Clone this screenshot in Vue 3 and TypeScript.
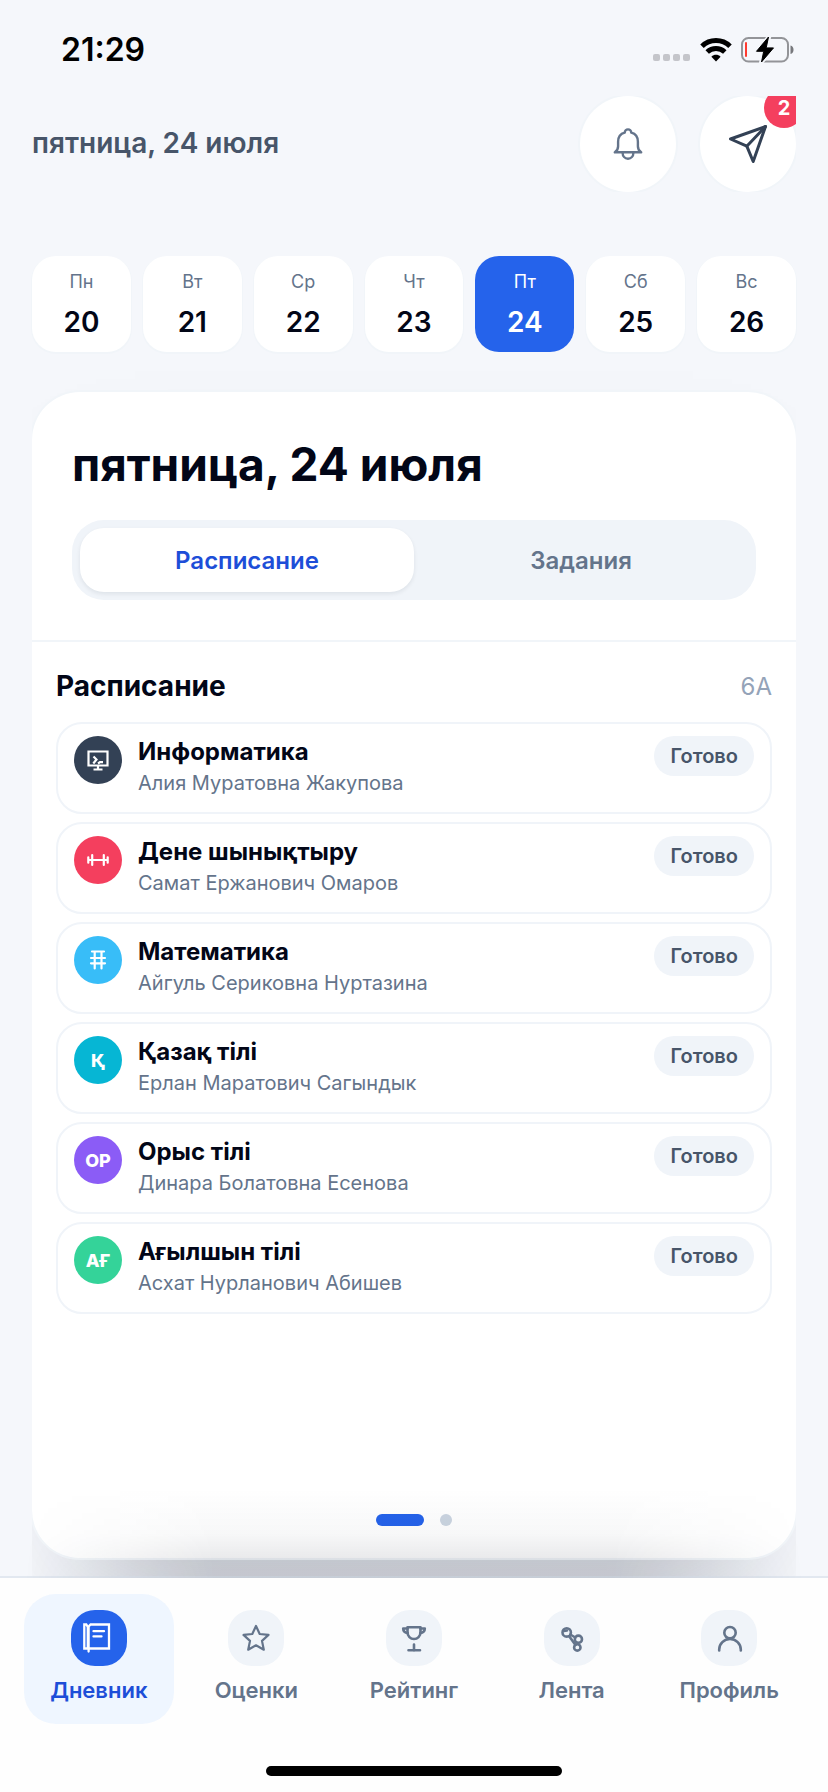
<script setup lang="ts">
import { ref } from 'vue'

interface Day { label: string; date: number }
interface Lesson { title: string; teacher: string; color: string; mark: string; icon?: 'screen' | 'dumbbell' | 'grid' }
interface Tab { id: string; label: string }

const today = 'пятница, 24 июля'
const selectedDate = ref(24)
const section = ref('schedule')
const activeTab = ref('diary')

const days: Day[] = [
  { label: 'Пн', date: 20 },
  { label: 'Вт', date: 21 },
  { label: 'Ср', date: 22 },
  { label: 'Чт', date: 23 },
  { label: 'Пт', date: 24 },
  { label: 'Сб', date: 25 },
  { label: 'Вс', date: 26 },
]

const lessons: Lesson[] = [
  { title: 'Информатика', teacher: 'Алия Муратовна Жакупова', color: '#334155', mark: '', icon: 'screen' },
  { title: 'Дене шынықтыру', teacher: 'Самат Ержанович Омаров', color: '#f43f5e', mark: '', icon: 'dumbbell' },
  { title: 'Математика', teacher: 'Айгуль Сериковна Нуртазина', color: '#38bdf8', mark: '', icon: 'grid' },
  { title: 'Қазақ тілі', teacher: 'Ерлан Маратович Сагындык', color: '#06b6d4', mark: 'Қ' },
  { title: 'Орыс тілі', teacher: 'Динара Болатовна Есенова', color: '#8b5cf6', mark: 'ОР' },
  { title: 'Ағылшын тілі', teacher: 'Асхат Нурланович Абишев', color: '#34d399', mark: 'АҒ' },
]

const tabs: Tab[] = [
  { id: 'diary', label: 'Дневник' },
  { id: 'grades', label: 'Оценки' },
  { id: 'rating', label: 'Рейтинг' },
  { id: 'feed', label: 'Лента' },
  { id: 'profile', label: 'Профиль' },
]
</script>

<template>
  <div class="page">
    <div class="status">
      <span class="clock">21:29</span>
      <div class="status-icons">
        <svg class="signal" width="38" height="26" viewBox="0 0 38 26" aria-hidden="true">
          <g fill="#c4c5ca">
            <rect x="0" y="17" width="7" height="7" rx="2" />
            <rect x="10" y="17" width="7" height="7" rx="2" />
            <rect x="20" y="17" width="7" height="7" rx="2" />
            <rect x="30" y="17" width="7" height="7" rx="2" />
          </g>
        </svg>
        <svg width="32" height="26" viewBox="0 0 32 26" aria-hidden="true">
          <g fill="none" stroke="#000" stroke-width="5">
            <path d="M2 9.2C9.8 1.6 22.2 1.6 30 9.2" />
            <path d="M7.2 15C12.2 10.3 19.8 10.3 24.8 15" />
          </g>
          <path d="M16 24.5l-4.6-4.8c2.6-2.5 6.6-2.5 9.2 0z" fill="#000" />
        </svg>
        <svg width="54" height="28" viewBox="0 0 54 28" aria-hidden="true">
          <rect x="1" y="2" width="46" height="23.5" rx="6.5" fill="none" stroke="#939498" stroke-width="2" />
          <path d="M49.5 9.5c4 1 4 7.500 0 8.500z" fill="#77787c" />
          <rect x="4" y="6" width="2" height="15" rx="1" fill="#ff3b30" />
          <path d="M28.300 .500 15 15.400h7.500L20 26.800 33 11.800h-7.800z" fill="#000" stroke="#f5f7fb" stroke-width="4" stroke-linejoin="round" />
          <path d="M27.500 1 15.500 15.300h7.200L20.500 26 32.500 11.900h-7.300z" fill="#000" stroke="#000" stroke-width="1" stroke-linejoin="round" />
        </svg>
      </div>
    </div>

    <header class="header">
      <p class="today">{{ today }}</p>
      <div class="actions">
        <button class="round" type="button" aria-label="Уведомления">
          <svg width="36" height="36" viewBox="0 0 36 36" fill="none" stroke="#64748b" stroke-width="2.400" stroke-linejoin="round" stroke-linecap="round">
            <path d="M4.800 26.300h26.400c-2.600-1.500-3.300-3-3.300-6v-4.500c0-4.800-2.700-8.100-6.600-9.100a3.300 3.300 0 0 0-6.600 0c-3.900 1-6.600 4.300-6.600 9.100v4.500c0 3-.7 4.500-3.300 6z" />
            <path d="M12.600 26.500c0 3.900 2.300 6.200 5.400 6.200s5.400-2.300 5.400-6.200" />
          </svg>
        </button>
        <button class="round" type="button" aria-label="Сообщения, 2 новых">
          <svg width="44" height="44" viewBox="0 0 44 44" fill="none" stroke="#334155" stroke-width="3" stroke-linejoin="round" stroke-linecap="round">
            <path d="M39.500 4.500 4.500 17 20.800 24.200 27.200 39.500z" />
            <path d="M20.800 24.200 39.500 4.500" />
          </svg>
          <span class="count">2</span>
        </button>
      </div>
    </header>

    <div class="week">
      <button
        v-for="day in days"
        :key="day.date"
        type="button"
        class="day"
        :class="{ active: day.date === selectedDate }"
        @click="selectedDate = day.date"
      >
        <span class="day-label">{{ day.label }}</span>
        <span class="day-date">{{ day.date }}</span>
      </button>
    </div>

    <main class="stage">
      <article class="card">
        <div class="card-head">
          <h1>{{ today }}</h1>
          <div class="segment">
            <button type="button" :class="{ active: section === 'schedule' }" @click="section = 'schedule'">Расписание</button>
            <button type="button" :class="{ active: section === 'tasks' }" @click="section = 'tasks'">Задания</button>
          </div>
        </div>
        <section class="schedule">
          <div class="schedule-head">
            <h2>Расписание</h2>
            <span class="group">6А</span>
          </div>
          <ul class="lessons">
            <li v-for="lesson in lessons" :key="lesson.title" class="lesson">
              <span class="subject" :style="{ backgroundColor: lesson.color }">
                <svg v-if="lesson.icon === 'screen'" width="28" height="28" viewBox="0 0 28 28" fill="none" stroke="#fff" stroke-width="2.200">
                  <path d="M4.500 5.500h19v14h-19zM14 19.500v4M9.500 23.500h9" />
                  <path d="M9.500 10.500l3 3-3.200 4M14 17.500l2-1.300h3" />
                </svg>
                <svg v-else-if="lesson.icon === 'dumbbell'" width="28" height="28" viewBox="0 0 28 28" fill="none" stroke="#fff" stroke-width="2.200" stroke-linecap="round">
                  <path d="M8.200 9v10M19.800 9v10M8.200 14h11.600M4.300 11.300v5.400M23.700 11.300v5.400M4.500 14h3M20.500 14h3" />
                </svg>
                <svg v-else-if="lesson.icon === 'grid'" width="28" height="28" viewBox="0 0 28 28" fill="none" stroke="#fff" stroke-width="2.200" stroke-linecap="round">
                  <path d="M8 5.500h12M7 12h14M7 17.300h14M10.700 5.500v17M17.500 5.500v17" />
                </svg>
                <template v-else>{{ lesson.mark }}</template>
              </span>
              <div class="lesson-text">
                <h3>{{ lesson.title }}</h3>
                <p>{{ lesson.teacher }}</p>
              </div>
              <span class="state">Готово</span>
            </li>
          </ul>
        </section>
        <div class="pager">
          <span class="dot current"></span>
          <span class="dot"></span>
        </div>
      </article>
    </main>

    <nav class="tabbar">
      <div class="tabs">
        <button
          v-for="tab in tabs"
          :key="tab.id"
          type="button"
          class="tab"
          :class="{ active: tab.id === activeTab }"
          @click="activeTab = tab.id"
        >
          <span class="tab-icon">
            <svg width="56" height="56" viewBox="0 0 56 56" fill="none" stroke="currentColor" stroke-width="2.600" stroke-linejoin="round" stroke-linecap="round" aria-hidden="true">
              <g v-if="tab.id === 'diary'" stroke-width="2.300" stroke-linejoin="miter">
                <path d="M13.300 14.500v24h3.500v-21.500l-1.500-2.500z" />
                <path d="M17.600 16.500l2-2H38v24H17.600M17.600 16.500v25" />
                <path d="M22.500 21.200h10.500M22.500 26.400h8" />
              </g>
              <path v-else-if="tab.id === 'grades'" stroke-width="2.200" d="M28 16l3.700 8 8.800.900-6.500 6 1.800 8.800L28 35.300l-7.800 4.400 1.800-8.800-6.500-6 8.800-.900z" />
              <g v-else-if="tab.id === 'rating'">
                <path d="M21.500 17.300h13v5.200a6.500 6.500 0 0 1-13 0zM28 34.500v6M22.500 40.300h11.500" />
                <path d="M21.500 18.500h-4.300c0 2.500 1.500 4.200 4.600 4.500M34.500 18.500h4.300c0 2.500-1.500 4.200-4.600 4.500" />
              </g>
              <g v-else-if="tab.id === 'feed'">
                <circle cx="22.700" cy="22.400" r="4.200" />
                <circle cx="34.400" cy="29.200" r="3.600" />
                <circle cx="33.300" cy="37.400" r="3.200" />
                <path d="M20 21l3-.5M26.300 24.500l5 3M25 26l6.500 9" />
              </g>
              <g v-else>
                <circle cx="29" cy="22.700" r="5.700" />
                <path d="M18.200 40.500v-1a10.800 10.500 0 0 1 21.600 0v1" />
              </g>
            </svg>
          </span>
          <span class="tab-label">{{ tab.label }}</span>
        </button>
      </div>
      <div class="home"></div>
    </nav>
  </div>
</template>

<style>
body {
  margin: 0;
  background: #f5f7fb;
}
</style>

<style scoped>
.page {
  min-height: 100vh;
  display: flex;
  flex-direction: column;
  box-sizing: border-box;
  background: #f5f7fb;
  color: #020617;
  font-family: Inter, "Noto Sans", sans-serif;
}
.page *, .page *::before { box-sizing: border-box; }
h1, h2, h3, p, ul { margin: 0; padding: 0; }
button {
  border: 0;
  padding: 0;
  background: none;
  color: inherit;
  font: inherit;
  cursor: pointer;
}
svg { display: block; flex: none; }

.status {
  height: 96px;
  padding: 4px 33px 0 61px;
  display: flex;
  align-items: center;
  justify-content: space-between;
}
.clock { font-size: 32px; line-height: 40px; font-weight: 600; color: #000; }
.status-icons { display: flex; align-items: center; gap: 9px; }

.header {
  height: 96px;
  margin: 0 32px;
  display: flex;
  align-items: center;
  justify-content: space-between;
  overflow: hidden;
}
.today { padding-bottom: 2px; font-size: 28px; line-height: 36px; font-weight: 600; color: #475569; }
.actions { display: flex; gap: 24px; }
.round {
  position: relative;
  width: 96px;
  height: 96px;
  border-radius: 50%;
  display: flex;
  align-items: center;
  justify-content: center;
  background: #fff;
  box-shadow: 0 0 0 2px #f1f5f9;
}
.count {
  position: absolute;
  top: -8px;
  right: -8px;
  width: 40px;
  height: 40px;
  border-radius: 50%;
  background: #f43f5e;
  color: #fff;
  font-size: 20px;
  line-height: 40px;
  font-weight: 700;
  text-align: center;
}

.week {
  margin: 64px 32px 0;
  display: grid;
  grid-template-columns: repeat(7, 1fr);
  gap: 12px;
}
.day {
  height: 96px;
  border-radius: 24px;
  display: flex;
  flex-direction: column;
  align-items: center;
  justify-content: center;
  gap: 8px;
  background: #fff;
  box-shadow: 0 1px 0 1px #f1f5f9;
}
.day-label { font-size: 18px; line-height: 28px; font-weight: 400; color: #64748b; }
.day-date { font-size: 28px; line-height: 36px; font-weight: 600; }
.day.active { background: #2563eb; color: #fff; box-shadow: none; }
.day.active .day-label { color: #fff; }

.stage {
  flex: 1;
  display: flex;
  margin: 0 32px;
  padding: 40px 0 18px;
  overflow: hidden;
}
.card {
  flex: 1;
  min-width: 0;
  display: flex;
  flex-direction: column;
  border-radius: 48px;
  background: #fff;
  box-shadow: 0 0 0 2px #f1f5f9, 0 48px 110px -64px rgba(15, 23, 42, 0.34);
}
.card-head { padding: 40px; border-bottom: 2px solid #f1f5f9; }
h1 { font-size: 46px; line-height: 64px; font-weight: 700; }
.segment {
  margin-top: 24px;
  padding: 8px;
  display: grid;
  grid-template-columns: 1fr 1fr;
  border-radius: 32px;
  background: #f0f4f9;
}
.segment button {
  height: 64px;
  border-radius: 24px;
  font-size: 24px;
  font-weight: 600;
  color: #64748b;
}
.segment .active {
  background: #fff;
  color: #1d4ed8;
  box-shadow: 0 2px 4px rgba(15, 23, 42, 0.08);
}
.schedule { padding: 24px 24px 0; }
.schedule-head {
  height: 40px;
  display: flex;
  align-items: center;
  justify-content: space-between;
}
h2 { font-size: 28px; font-weight: 700; }
.group { font-size: 24px; color: #94a3b8; }
.lessons {
  margin-top: 16px;
  display: flex;
  flex-direction: column;
  gap: 8px;
  list-style: none;
}
.lesson {
  min-height: 92px;
  padding: 12px 16px;
  display: flex;
  align-items: flex-start;
  gap: 16px;
  border: 2px solid #f0f4f9;
  border-radius: 26px;
}
.subject {
  flex: none;
  width: 48px;
  height: 48px;
  border-radius: 50%;
  display: flex;
  align-items: center;
  justify-content: center;
  color: #fff;
  font-size: 18px;
  font-weight: 800;
}
.lesson-text { flex: 1; min-width: 0; }
h3 { font-size: 24px; line-height: 32px; font-weight: 700; }
.lesson-text p { font-size: 20px; line-height: 30px; color: #64748b; }
.state {
  padding: 0 16px;
  border-radius: 20px;
  background: #f0f4f9;
  color: #475569;
  font-size: 20px;
  line-height: 40px;
  font-weight: 600;
}
.pager {
  margin-top: auto;
  padding: 32px 0;
  display: flex;
  justify-content: center;
  gap: 16px;
}
.dot { width: 12px; height: 12px; border-radius: 6px; background: #cbd5e1; }
.dot.current { width: 48px; background: #2563eb; }

.tabbar {
  position: relative;
  border-top: 2px solid #e2e8f0;
  padding: 16px 24px;
  background: #fefefe;
}
/* soft shade rising from the bar over the bottom of the card */
.tabbar::before {
  content: "";
  position: absolute;
  left: 0;
  right: 0;
  bottom: 100%;
  height: 90px;
  background: linear-gradient(to top, rgba(15, 23, 42, 0.13), rgba(15, 23, 42, 0.09) 22%, rgba(15, 23, 42, 0.03) 50%, transparent);
  mask-image: linear-gradient(to right, transparent 3%, #000 26%, #000 74%, transparent 97%);
  pointer-events: none;
}
.tabs { display: grid; grid-template-columns: repeat(5, 1fr); gap: 8px; }
.tab {
  height: 130px;
  padding-top: 16px;
  display: flex;
  flex-direction: column;
  align-items: center;
  gap: 8px;
  border-radius: 32px;
  color: #64748b;
}
.tab-icon {
  width: 56px;
  height: 56px;
  border-radius: 24px;
  background: #f0f4f9;
}
.tab-label { font-size: 22px; line-height: 32px; font-weight: 600; }
.tab.active { background: #eff6ff; color: #1d4ed8; }
.tab.active .tab-icon { background: #2563eb; color: #fff; }
.home {
  width: 38%;
  height: 10px;
  margin: 42px auto 0;
  border-radius: 5px;
  background: #000;
}
</style>
